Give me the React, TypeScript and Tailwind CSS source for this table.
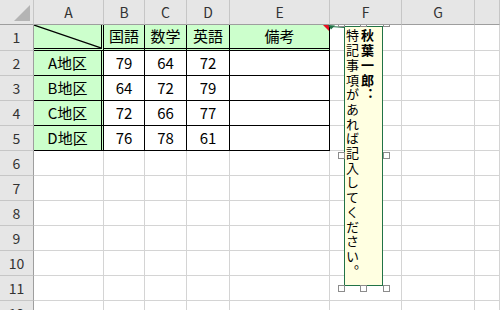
import React from 'react';

const colHeads = ['A', 'B', 'C', 'D', 'E', 'F', 'G', ''];

const subjects = ['国語', '数学', '英語', '備考'];

const scores: [string, string, string, string][] = [
  ['A地区', '79', '64', '72'],
  ['B地区', '64', '72', '79'],
  ['C地区', '72', '66', '77'],
  ['D地区', '76', '78', '61'],
];

function Cell({ className = '', children }: { className?: string; children?: React.ReactNode }) {
  return <div className={`relative flex items-center justify-center ${className}`}>{children}</div>;
}

function Handle({ className }: { className: string }) {
  return <div className={`absolute w-[7px] h-[7px] border border-[#8c8c8c] bg-white ${className}`} />;
}

export default function App() {
  const grid = 'border-r border-b border-[#d4d4d4]';
  const rowHead = 'border-r border-b border-r-[#9e9e9e] border-b-[#c6c6c6] bg-[#e6e6e6] text-[#333] text-[14px]';

  const rows: React.ReactNode[] = [];

  // row 1: subject headers
  rows.push(
    <React.Fragment key="r1">
      <Cell className={rowHead}>1</Cell>
      <Cell className="border-r-[3px] border-b-[3px] border-double border-black bg-[#ccffcc]">
        <svg className="absolute inset-0 w-full h-full" preserveAspectRatio="none" viewBox="0 0 100 100">
          <line x1="0" y1="0" x2="100" y2="100" stroke="black" strokeWidth="1.2" vectorEffect="non-scaling-stroke" />
        </svg>
      </Cell>
      {subjects.map((s, i) => (
        <Cell key={s} className="border-r border-b-[3px] border-double border-black bg-[#ccffcc]">
          {s}
          {i === 3 && (
            <span className="absolute top-0 right-0 border-t-[6px] border-l-[6px] border-t-[#e81123] border-l-transparent" />
          )}
        </Cell>
      ))}
      <Cell className={grid} />
      <Cell className={grid} />
      <Cell className={grid} />
    </React.Fragment>
  );

  scores.forEach((r, idx) => {
    rows.push(
      <React.Fragment key={r[0]}>
        <Cell className={rowHead}>{idx + 2}</Cell>
        <Cell className="border-r-[3px] border-b border-double border-black bg-[#ccffcc]">{r[0]}</Cell>
        <Cell className="border-r border-b border-black">{r[1]}</Cell>
        <Cell className="border-r border-b border-black">{r[2]}</Cell>
        <Cell className="border-r border-b border-black">{r[3]}</Cell>
        <Cell className="border-r border-b border-black" />
        <Cell className={grid} />
        <Cell className={grid} />
        <Cell className={grid} />
      </React.Fragment>
    );
  });

  for (let n = 6; n <= 12; n++) {
    rows.push(
      <React.Fragment key={n}>
        <Cell className={rowHead}>{n}</Cell>
        {colHeads.map((c, i) => (
          <Cell key={i} className={grid} />
        ))}
      </React.Fragment>
    );
  }

  return (
    <div className="relative w-[500px] h-[310px] overflow-hidden bg-white text-black text-[15px] font-['Noto_Sans_CJK_JP',sans-serif]">
      <div className="grid grid-cols-[34px_70px_41px_42px_43px_100px_72px_73px_25px] grid-rows-[25px_26px_repeat(11,25px)]">
        {/* corner */}
        <div className="relative border-r border-b border-r-[#c6c6c6] border-b-[#9e9e9e] bg-[#e6e6e6]">
          <span className="absolute right-[3px] bottom-[3px] border-b-[16px] border-l-[16px] border-b-[#b4b4b4] border-l-transparent" />
        </div>
        {colHeads.map((c, i) => (
          <Cell key={i} className="border-r border-b border-r-[#c6c6c6] border-b-[#9e9e9e] bg-[#e6e6e6] text-[#333] text-[14px]">
            {c}
          </Cell>
        ))}
        {rows}
      </div>

      {/* comment shape overlay, clipped under the column header */}
      <div className="absolute left-0 right-0 top-[25px] bottom-0 overflow-hidden">
        <svg className="absolute left-[327px] top-0 w-[18px] h-[6px]" viewBox="0 0 18 6">
          <line x1="4" y1="1.5" x2="18" y2="2.5" stroke="#217346" strokeWidth="1" />
          <polygon points="1,0 8,0.5 4,4.5" fill="#217346" />
        </svg>
        <div className="absolute left-[344px] top-[1px] w-[39px] h-[260px] border border-[#217346] bg-[#ffffe1]">
          <div className="h-full pt-[2px] pr-[7px] [writing-mode:vertical-rl] text-[13px] leading-[15px] tracking-[1.7px] text-black">
            <span className="font-bold">
              秋葉一郎<span className="[font-feature-settings:'vert'_0]">：</span>
            </span>
            <br />
            特記事項があれば記入してください。
          </div>
        </div>
        <Handle className="left-[338px] top-[-5px]" />
        <Handle className="left-[360px] top-[-5px]" />
        <Handle className="left-[383px] top-[-5px]" />
        <Handle className="left-[338px] top-[127px]" />
        <Handle className="left-[383px] top-[127px]" />
        <Handle className="left-[338px] top-[260px]" />
        <Handle className="left-[360px] top-[260px]" />
        <Handle className="left-[383px] top-[260px]" />
      </div>
    </div>
  );
}
